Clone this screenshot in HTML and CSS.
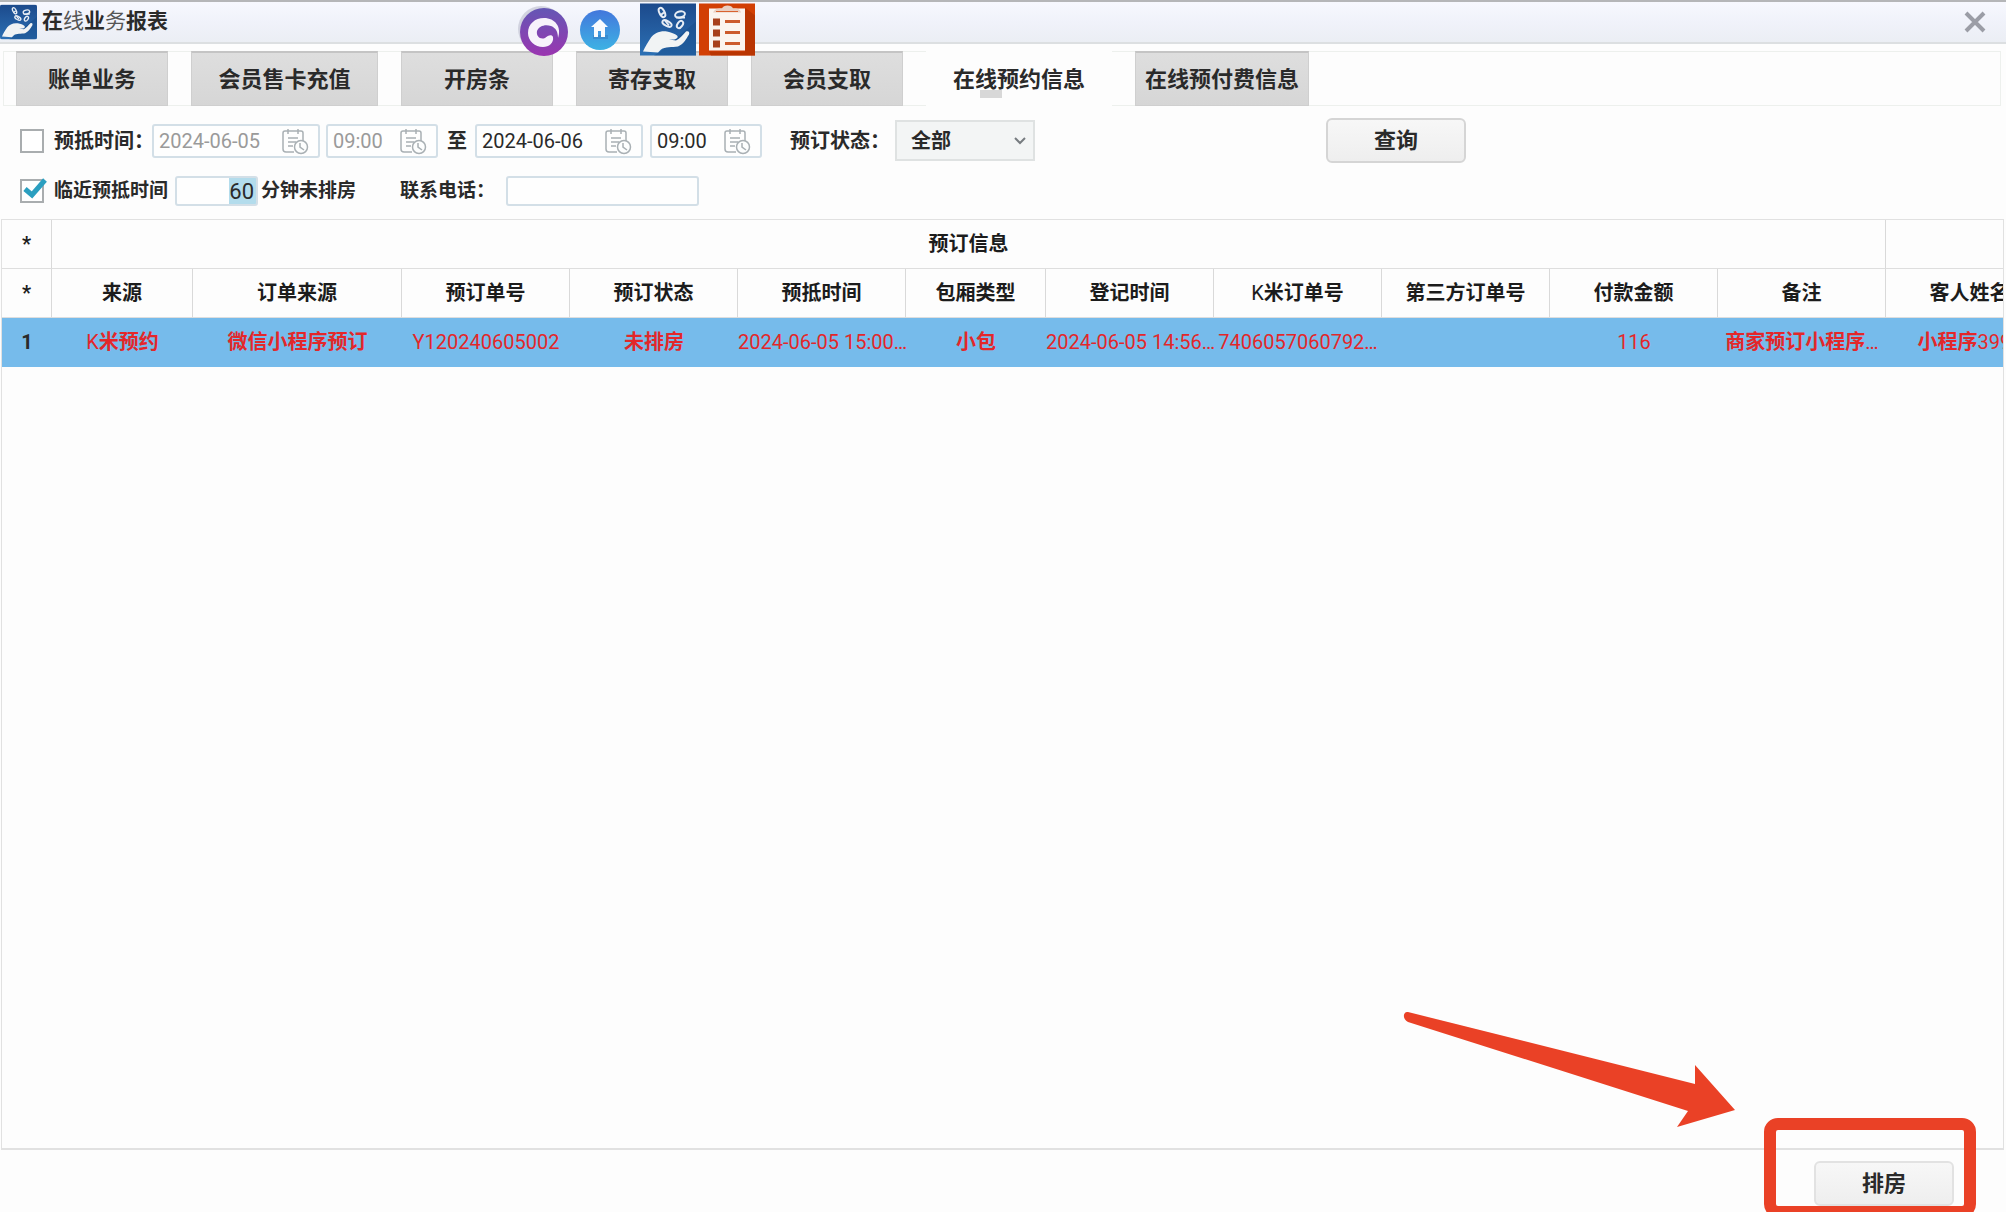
FILE: index.html
```html
<!DOCTYPE html>
<html lang="zh-CN">
<head>
<meta charset="utf-8">
<title>在线业务报表</title>
<link rel="stylesheet" href="styles.css">
</head>
<body>
<svg class="defs" aria-hidden="true">
  <defs>
    <linearGradient id="blue" x1="0" y1="0" x2="0" y2="1"><stop offset="0" stop-color="#1c4a8c"/><stop offset="1" stop-color="#2c70b4"/></linearGradient>
    <linearGradient id="purple" x1="0" y1="0" x2="0" y2="1"><stop offset="0" stop-color="#6457b4"/><stop offset="1" stop-color="#9a35b0"/></linearGradient>
    <linearGradient id="sky" x1="0" y1="0" x2="0" y2="1"><stop offset="0" stop-color="#4377dc"/><stop offset="1" stop-color="#3db2e4"/></linearGradient>
    <symbol id="hand" viewBox="0 0 56 52">
      <rect width="56" height="52" fill="url(#blue)"/>
      <path d="M20 48 L56 18 V52 H14Z" fill="#164a86" opacity=".45"/>
      <path d="M3 48 C5 43 8 39 11 34 C14 30 20 27 27 28 C31 29 35 30 37 32 C39 34 36 36 33 36 L29 36 L36 37 C40 35 43 31 46 28 C48 27 50 28 49 31 C46 36 43 41 38 43 C32 44 25 43 21 46 L18 49Z" fill="#f1f3f4"/>
      <g fill="#1f5596" stroke="#e8edf5" stroke-width="2">
        <ellipse cx="22" cy="9" rx="2.500" ry="5" transform="rotate(-28 22 9)"/>
        <ellipse cx="27" cy="20" rx="5" ry="2.500" transform="rotate(28 27 20)"/>
        <ellipse cx="40" cy="11" rx="5" ry="3" transform="rotate(-14 40 11)"/>
        <ellipse cx="40" cy="21" rx="2.500" ry="4" transform="rotate(35 40 21)"/>
        <path d="M36 14h9M25 17l4 5M20 12l4-3"/>
      </g>
    </symbol>
    <symbol id="calendar" viewBox="0 0 27 27">
      <g fill="none" stroke="currentColor" stroke-width="1.500">
        <path d="M12 24H4a3 3 0 0 1-3-3V5a2 2 0 0 1 2-2h16a2 2 0 0 1 2 2v8M6 1v5M16 1v5M6 10h10M6 14h8M6 18h5"/>
        <circle cx="19" cy="19" r="6.500" fill="#fdfefe"/>
        <path d="M18 15v4l4 3"/>
      </g>
    </symbol>
  </defs>
</svg>

<div class="window">
  <header class="titlebar">
    <svg class="app-icon" aria-hidden="true"><use href="#hand"/></svg>
    <h1 class="title">在<span class="thin">线</span>业<span class="thin">务</span>报表</h1>
    <button class="close" type="button" aria-label="关闭">
      <svg viewBox="0 0 22 22"><path d="M2 2L20 20M20 2L2 20" stroke="#9b9da6" stroke-width="4"/></svg>
    </button>
  </header>

  <div class="launcher">
    <svg class="launch-swirl" viewBox="0 0 50 52" aria-hidden="true">
      <circle cx="23" cy="25" r="23" fill="#c9cbd8" opacity=".8"/>
      <circle cx="26" cy="28" r="24" fill="url(#purple)"/>
      <path d="M40 34 C44 23 37 14 26 14 C17 14 10 20 10 29 C10 37 17 43 25 43 C31 43 36 39 35 33 C34 30 30 31 27 34 C22 36 18 32 19 27 C21 22 27 20 33 22 C38 24 40 28 40 34Z" fill="#f7f2fb"/>
    </svg>
    <svg class="launch-home" viewBox="0 0 42 42" aria-hidden="true">
      <circle cx="21" cy="21" r="20" fill="url(#sky)"/>
      <path d="M14 26h15v4h-15z" fill="#2f78bd" opacity=".5"/>
      <path d="M21 10l8 8h-3v10h-4v-6h-3v6h-4V18h-3z" fill="#f8fbfe"/>
    </svg>
    <svg class="launch-tile" aria-hidden="true"><use href="#hand"/></svg>
    <svg class="launch-tile" viewBox="0 0 56 52" aria-hidden="true">
      <rect width="56" height="52" fill="#d23f04"/>
      <path d="M46 4L56 12V52H12L10 48H46Z" fill="#b33302" opacity=".8"/>
      <path d="M10 5h36v42H10z" fill="#fbf4ef"/>
      <path d="M14 9c2-4 5-4 9-4 1-4 10-4 11 0 4 0 7 0 8 4z" fill="#e9cfc2"/>
      <path d="M17 8h22" stroke="#d9622f" stroke-width="1"/>
      <path d="M14 15h7v7h-7zM14 26h7v7h-7zM14 37h7v7h-7z" fill="#a8401c"/>
      <path d="M26 18h15M26 29h15M26 40h15" stroke="#cc5a2c" stroke-width="3"/>
    </svg>
  </div>

  <nav class="tabs">
    <button class="tab" type="button">账单业务</button>
    <button class="tab tab-wide" type="button">会员售卡充值</button>
    <button class="tab" type="button">开房条</button>
    <button class="tab" type="button">寄存支取</button>
    <button class="tab" type="button">会员支取</button>
    <button class="tab tab-open" type="button">在线预约信息</button>
    <button class="tab tab-medium" type="button">在线预付费信息</button>
  </nav>

  <form class="filters">
    <div class="filter-row filter-main">
      <input class="check" type="checkbox" id="arrive">
      <label for="arrive">预抵时间：</label>
      <div class="field date muted"><input class="box" type="text" value="2024-06-05" aria-label="开始日期" disabled><svg><use href="#calendar"/></svg></div>
      <div class="field time muted"><input class="box" type="text" value="09:00" aria-label="开始时间" disabled><svg><use href="#calendar"/></svg></div>
      <span>至</span>
      <div class="field date"><input class="box" type="text" value="2024-06-06" aria-label="结束日期"><svg><use href="#calendar"/></svg></div>
      <div class="field time"><input class="box" type="text" value="09:00" aria-label="结束时间"><svg><use href="#calendar"/></svg></div>
      <label for="status">预订状态：</label>
      <div class="field choice">
        <select id="status"><option>全部</option></select>
        <svg viewBox="0 0 12 8"><path d="M1 1l5 5 5-5" fill="none" stroke="#777c80" stroke-width="2"/></svg>
      </div>
      <button class="button" type="button">查询</button>
    </div>
    <div class="filter-row filter-extra">
      <div class="field tick">
        <input class="check" type="checkbox" id="soon" checked>
        <svg viewBox="0 0 28 26"><path d="M5 12l7 6L25 3" fill="none" stroke="#2b9fc0" stroke-width="5"/></svg>
      </div>
      <label for="soon">临近预抵时间</label>
      <input class="box minutes" type="text" value="60" aria-label="分钟">
      <span>分钟未排房</span>
      <label for="phone">联系电话：</label>
      <input class="box phone" type="text" id="phone">
    </div>
  </form>

  <main class="grid-panel">
    <table class="orders">
      <colgroup>
        <col class="c-index"><col class="c-small"><col class="c-source"><col class="c-norm"><col class="c-norm"><col class="c-norm"><col class="c-room"><col class="c-norm"><col class="c-norm"><col class="c-norm"><col class="c-norm"><col class="c-norm"><col class="c-norm">
      </colgroup>
      <thead>
        <tr><th>*</th><th colspan="11">预订信息</th><th></th></tr>
        <tr><th>*</th><th>来源</th><th>订单来源</th><th>预订单号</th><th>预订状态</th><th>预抵时间</th><th>包厢类型</th><th>登记时间</th><th><span class="num">K</span>米订单号</th><th>第三方订单号</th><th>付款金额</th><th>备注</th><th>客人姓名</th></tr>
      </thead>
      <tbody>
        <tr><th>1</th><td><span class="num">K</span>米预约</td><td>微信小程序预订</td><td class="num">Y120240605002</td><td>未排房</td><td class="num">2024-06-05 15:00…</td><td>小包</td><td class="num">2024-06-05 14:56…</td><td class="num">7406057060792…</td><td></td><td class="num">116</td><td>商家预订小程序<span class="num">…</span></td><td>小程序<span class="num">3999</span></td></tr>
      </tbody>
    </table>
  </main>

  <footer class="actions">
    <button class="button" type="button">排房</button>
  </footer>

  <svg class="arrow" viewBox="0 0 332 116" aria-hidden="true">
    <path d="M5 1L292 73V54L332 99L274 116L285 100L5 11C-1 8 0 0 5 1Z" fill="#ea4126"/>
  </svg>
  <div class="highlight"></div>
</div>
</body>
</html>
```
FILE: styles.css
```css
* { box-sizing: border-box; }

body {
  margin: 0;
  background: #fdfdfd;
  color: #2a2a2a;
  font: 700 20px/28px Roboto, "Noto Sans CJK SC", sans-serif;
}

button, input, select { font: inherit; color: inherit; margin: 0; }

.defs { position: absolute; width: 0; height: 0; }

.window {
  position: relative;
  display: flex;
  flex-direction: column;
  height: 100vh;
  overflow: hidden;
}

/* Title bar */
.titlebar {
  display: flex;
  flex: none;
  align-items: center;
  height: 44px;
  border-top: 2px solid #b5b6b8;
  border-bottom: 2px solid #dcdfe1;
  background: linear-gradient(#f7f8fe, #f0f2fa 50%, #ebeef4);
}
.app-icon { width: 37px; height: 36px; border-radius: 3px; }
.title { flex: 1; margin: 0 0 0 5px; font-size: 21px; line-height: 28px; padding-bottom: 2px; }
.thin { font-weight: 400; color: #555; }
.close { width: 22px; height: 22px; margin-right: 20px; padding: 0; border: 0; background: none; }
.close svg { display: block; }

/* Shortcut icons floating over the title bar */
.launcher { position: absolute; top: 3px; left: 518px; display: flex; align-items: center; }
.launch-swirl { width: 50px; height: 52px; margin-right: 11px; }
.launch-home { width: 42px; height: 42px; margin-right: 19px; }
.launch-tile { width: 56px; height: 53px; margin-right: 3px; }

/* Tabs */
.tabs {
  display: flex;
  flex: none;
  gap: 23px;
  height: 55px;
  margin: 7px 5px 0 3px;
  padding-left: 13px;
  box-shadow: inset 0 0 0 1px #edf0ed;
}
.tab {
  width: 152px;
  padding: 1px 0 0;
  border: 1px solid #cfcfcf;
  border-top: 2px solid #c4c4c4;
  background: linear-gradient(#dedede, #d6d6d6);
  font-size: 22px;
  white-space: nowrap;
}
.tab-wide { width: 187px; }
.tab-medium { width: 174px; }
.tab-open { width: 186px; border-color: #fdfdfd; background: linear-gradient(#d8d8d8, #d8d8d8) 53px 37px / 22px 8px no-repeat #fdfdfd; }

/* Filters */
.filters { flex: none; padding: 12px 0 13px 20px; }
.filter-row { display: grid; align-items: center; white-space: nowrap; }
.filter-main { grid-template-columns: 34px 98px 174px 121px 28px 175px 140px 105px 431px 140px; height: 45px; }
.filter-extra { grid-template-columns: 34px 121px 86px 139px 106px 193px; height: 30px; margin-top: 13px; font-size: 19px; }
.check { appearance: none; width: 24px; height: 24px; border: 2px solid #a9adaf; background: #fff; }
.field { position: relative; }
.box { width: 100%; height: 34px; padding: 0 5px; border: 2px solid #d3dfe7; border-radius: 3px; background: #fefefe; font-weight: 400; }
.date { width: 168px; }
.time { width: 112px; }
.muted { color: #9a9a9a; }
.date svg, .time svg { position: absolute; top: 4px; right: 11px; width: 27px; height: 27px; color: #a9b0b4; }
.choice { width: 140px; }
.choice select { appearance: none; display: block; width: 100%; height: 41px; padding: 0 14px; border: 2px solid #dfe2e2; background: #f3f5f5; font-weight: 700; }
.choice svg { position: absolute; top: 17px; right: 9px; width: 12px; height: 8px; }
.tick { height: 24px; }
.tick .check { display: block; }
.tick svg { position: absolute; top: -2px; left: 0; width: 28px; height: 26px; pointer-events: none; }
.minutes { width: 83px; height: 30px; padding: 0 2px; font-size: 22px; text-align: right; background: linear-gradient(#b3dcec, #b3dcec) right 0 top 0 / 27px 100% no-repeat #fefefe; }
.phone { height: 30px; }

.button {
  width: 140px;
  height: 45px;
  padding: 0;
  border: 2px solid #d5d5d5;
  border-radius: 6px;
  background: linear-gradient(#f7f7f7, #eee);
  font-size: 22px;
}
.actions .button { border-color: #e2e2e2; }

/* Orders table */
.grid-panel { flex: 1; margin: 0 2px 0 1px; border: 2px solid #e1e1e1; border-width: 1px 1px 2px; overflow: hidden; }
.orders { width: 2052px; border-collapse: separate; border-spacing: 0; table-layout: fixed; }
.c-index { width: 50px; }
.c-small { width: 141px; }
.c-source { width: 209px; }
.c-norm { width: 168px; }
.c-room { width: 140px; }
.orders th, .orders td { height: 49px; padding: 0 0 1px; text-align: center; font-weight: 700; white-space: nowrap; }
.orders thead th { border-right: 1px solid #d9d9d9; border-bottom: 1px solid #dedede; color: #1c1c1c; }
.orders tbody tr { background: #76bbeb; }
.orders tbody td { color: #e3272a; }
.orders .num { font-weight: 400; }

.actions { display: flex; flex: none; justify-content: flex-end; height: 62px; padding: 11px 52px 0 0; }

/* Call-out over the page */
.arrow { position: absolute; right: 271px; bottom: 85px; width: 332px; height: 116px; }
.highlight { position: absolute; right: 30px; bottom: -6px; width: 212px; height: 100px; border: 12px solid #ea4126; border-radius: 14px; }
```
